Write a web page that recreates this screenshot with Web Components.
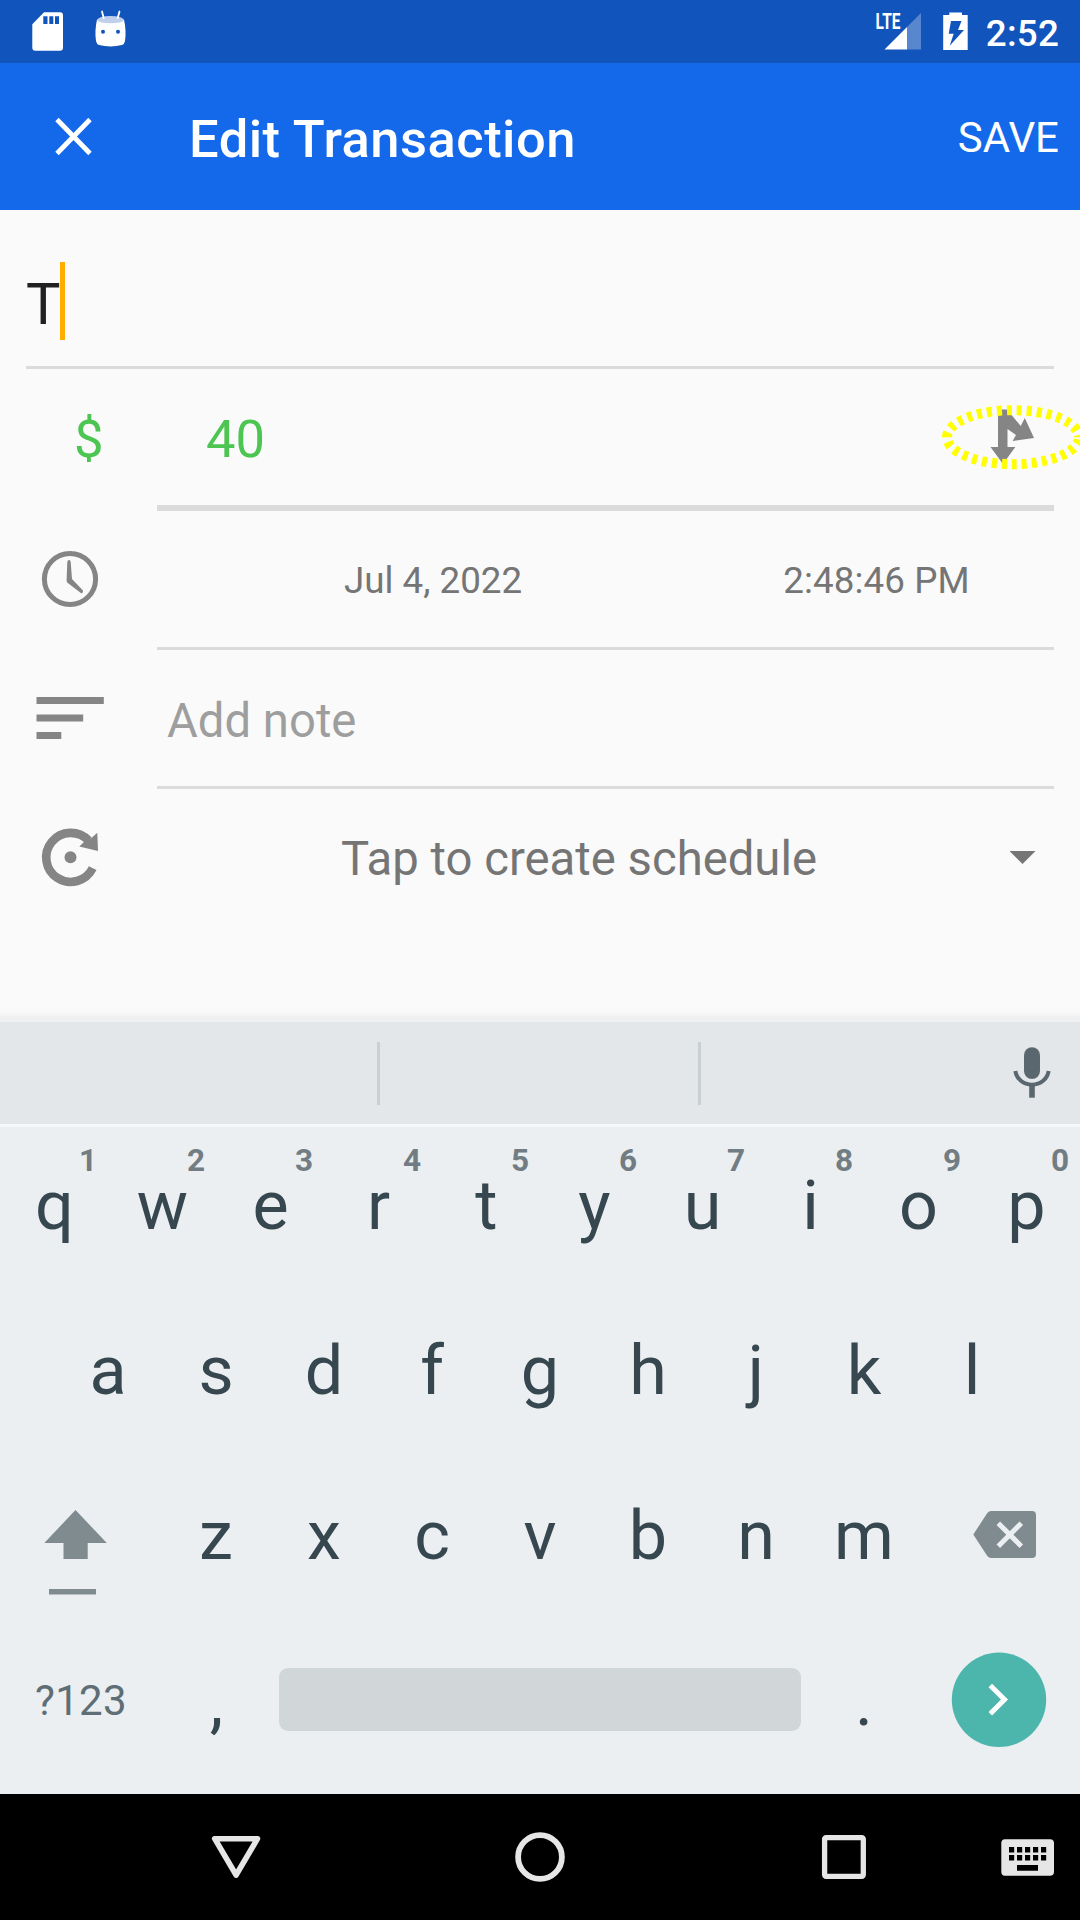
<!DOCTYPE html>
<html lang="en">
<head>
<meta charset="utf-8">
<title>Edit Transaction</title>
<style>
html,body{margin:0;padding:0}
body{width:1080px;height:1920px;overflow:hidden;background:#fafafa;font-family:Roboto,"Noto Sans",sans-serif}
</style>
</head>
<body>
<transaction-screen></transaction-screen>
<script>
const define=(name,html,setup)=>customElements.define(name,class extends HTMLElement{
  connectedCallback(){
    if(this.shadowRoot)return;
    const t=document.createElement('template');
    t.innerHTML='<style>*{box-sizing:border-box}svg{display:block;flex:none}</style>'+html;
    this.attachShadow({mode:'open'}).appendChild(t.content.cloneNode(true));
    if(setup)setup(this,this.shadowRoot);
  }
});

/* Each icon: drawing box (screen units) and shapes */
const ICONS={
  notifications:['0 0 160 63',`<path fill="#fff" fill-rule="evenodd" d="M44 12.3H60Q63 12.3 63 15.3V47.7Q63 50.7 60 50.7H35.3Q32.3 50.7 32.3 47.7V24.2ZM43.3 16.3V24H47.5V16.3ZM49.3 16.3V24H53.3V16.3ZM55 16.3V24H59V16.3Z"/>
   <path fill="#fff" d="M97 19.5Q110.5 25.5 124 19.5Q126.5 31 125 41Q124.4 44.3 122 45.1Q110.5 48 99 45.1Q96.600 44.3 96 41Q94.500 31 97 19.500Z"/>
   <path fill="#c0d0ec" d="M97 20Q99 16 110.500 16Q122 16 124 20Q122 23.300 110.500 23.300Q99 23.300 97 20Z"/>
   <path d="M102 11.500L103.700 18M119.500 11.500L117.700 18" stroke="#fff" stroke-width="1.800" stroke-linecap="round"/>
   <circle cx="103" cy="31.700" r="2" fill="#1054bc"/><circle cx="118" cy="31.700" r="2" fill="#1054bc"/>`],
  signal:['872 0 56 63',`<path fill="#fff" fill-opacity=".3" d="M907 27L921 13V49.500H907Z"/><path fill="#fff" d="M884.500 49.500L907 27V49.500Z"/>
   <text x="875.500" y="29" font-family="Roboto" font-weight="700" font-size="22" fill="#fff" textLength="25" lengthAdjust="spacingAndGlyphs">LTE</text>`],
  battery:['928 0 52 63','<path fill="#fff" fill-rule="evenodd" d="M949.300 12.500H962V15H967.700V50H943.200V15H949.300ZM951 21L948.700 33.700H953.700L949.700 45.700L964 30H958L961.500 21Z"/>'],
  close:['0 63 157 147','<path d="M57 119.500L90 153.500M90 119.500L57 153.500" stroke="#fff" stroke-width="4.800" fill="none"/>'],
  split:['923 369 157 136',`<path fill="#858585" d="M998 409.500H1007L1020.700 426L1024.800 418L1034 438L1012.600 441L1016 435L1007.500 429V447H1015.300L1003 464L990.500 447H998Z"/>
   <g fill="none" stroke="#ff0" stroke-width="10" stroke-dasharray="5 5">
   <path d="M1013 410.200A66 27 0 0 1 1079 437.200" stroke-dashoffset="6.200"/>
   <path d="M1013 410.200A66 27 0 0 0 947 437.200" stroke-dashoffset="8.800"/>
   <path d="M1013 464.200A66 27 0 0 0 1079 437.200" stroke-dashoffset="1.200"/>
   <path d="M1013 464.200A66 27 0 0 1 947 437.200" stroke-dashoffset="3.800"/></g>`],
  clock:['0 511 157 136','<circle cx="70" cy="579" r="25.600" fill="none" stroke="#858585" stroke-width="5"/><path fill="#858585" d="M67.300 562Q67.500 560 69.200 560Q70.500 560 70.700 562L72 579L83 590.500Q83.500 592.500 81.500 593.600L67.800 583Q66.600 582 66.600 580.500Z"/>'],
  note:['0 650 157 136','<path fill="#858585" d="M36.500 697H103.800V704H36.500ZM36.500 714.500H83.200V721.500H36.500ZM36.500 732H61.300V739H36.500Z"/>'],
  repeat:['0 789 157 136','<circle cx="70.500" cy="857.200" r="6" fill="#858585"/><path d="M92.700 868.200A24.500 24.500 0 1 1 88.500 840.500" fill="none" stroke="#858585" stroke-width="8.600"/><path fill="#858585" d="M97.300 832.700L98 851L79.300 846.500L84.500 841.500L91.200 838.200Z"/>'],
  dropdown:['1006 845 34 24','<path fill="#757575" d="M1009.500 851H1035.500L1022.500 864Z"/>'],
  mic:['1000 1022 80 102','<rect x="1024" y="1047.200" width="16" height="31.800" rx="8" fill="#5b676e"/><path d="M1015.400 1071A16.700 15.300 0 0 0 1048.600 1071" fill="none" stroke="#5b676e" stroke-width="4"/><path d="M1029.200 1086H1034.800V1097.700H1029.200Z" fill="#5b676e"/>'],
  shift:['0 1454 162 165','<path fill="#808b8f" d="M75.500 1510L106.800 1543H87.700V1559H63.500V1543H44.300ZM49 1589H96V1594.500H49Z"/>'],
  backspace:['918 1454 162 165','<path fill="#808b8f" d="M973.300 1534.500L987.300 1513Q988.800 1511 991 1511H1032Q1036 1511 1036 1515V1554Q1036 1558 1032 1558H991Q988.800 1558 987.300 1556Z"/><path d="M998.300 1523.200L1021.300 1546.200M1021.300 1523.200L998.300 1546.200" stroke="#ebeff2" stroke-width="5"/>'],
  enter:['918 1619 162 165','<circle cx="999" cy="1699.800" r="47.200" fill="#4db6ac"/><path d="M990.300 1685.500L1004.500 1699.600L990.300 1713.700" fill="none" stroke="#fff" stroke-width="5"/>'],
  back:['204 1830 64 54','<path d="M214.700 1838.700H257.500L236.100 1875Z" fill="none" stroke="#e6e6e6" stroke-width="5.600" stroke-linejoin="round"/>'],
  home:['508 1825 64 64','<circle cx="540" cy="1857" r="21.900" fill="none" stroke="#e6e6e6" stroke-width="5.800"/>'],
  recents:['812 1825 64 64','<rect x="824.600" y="1837.600" width="38.700" height="38.700" rx="1.500" fill="none" stroke="#e6e6e6" stroke-width="5.300"/>'],
  keyboard:['996 1830 63 54','<path fill="#e6e6e6" fill-rule="evenodd" d="M1005 1839.300H1050Q1054 1839.300 1054 1843.300V1871.700Q1054 1875.700 1050 1875.700H1005Q1001.300 1875.700 1001.300 1871.700V1843.300Q1001.300 1839.300 1005 1839.300Z'
    +[1847,1855].map(y=>[1009,1017,1025,1033,1041].map(x=>`M${x} ${y}h5.200v5.500h-5.200Z`).join('')).join('')+'M1017 1865H1038V1870.700H1017Z"/>']
};
define('ui-icon','<style>:host{display:block;flex:none}</style>',(el,root)=>{
  const [box,body]=ICONS[el.getAttribute('name')],[,,w,h]=box.split(' ');
  root.innerHTML+=`<svg width="${w}" height="${h}" viewBox="${box}">${body}</svg>`;
});

define('status-bar',`<style>
:host{display:flex;height:63px;background:#1054bc;color:#fff}
.sp{flex:1}
span{flex:none;width:100px;font-size:36.75px;font-weight:500;padding:4px 21px 0 0;height:63px;line-height:60px;white-space:nowrap;display:flex;justify-content:flex-end;letter-spacing:.2px}
</style><ui-icon name="notifications"></ui-icon><div class="sp"></div><ui-icon name="signal"></ui-icon><ui-icon name="battery"></ui-icon><span>2:52</span>`);

define('app-bar',`<style>
:host{display:flex;height:147px;background:#1469eb;color:#fff}
h1{margin:0 0 0 32px;flex:1;font-size:52.5px;font-weight:500;line-height:147px;padding-top:3px;height:147px;letter-spacing:.47px}
b{font-weight:400;font-size:42px;line-height:147px;padding:1px 21px 0 0}
</style><ui-icon name="close"></ui-icon><h1><slot></slot></h1><b>SAVE</b>`);

define('form-row',`<style>
:host{display:block}
.body{display:flex;align-items:center;height:136px}
.lead{width:157px;flex:none;display:flex}
.main{flex:1;display:flex;align-items:center}
.line{height:var(--line,3px);margin:0 26px 0 157px;background:#dbdbdb}
</style><div class="body"><div class="lead"><slot name="lead"></slot></div><div class="main"><slot></slot></div></div><div class="line"></div>`);

define('title-field',`<style>
:host{display:flex;align-items:center;height:159px;margin:0 26px;border-bottom:3px solid #dbdbdb;color:#212121;font-size:57.75px}
span{display:block;width:34px;padding-top:6px;margin-top:26px;line-height:78px;white-space:nowrap}
i{width:5px;height:78px;background:#ffae00;margin-top:26px}
</style><span><slot></slot></span><i></i>`);

define('key-cap',`<style>
:host{display:flex;position:relative;width:108px;height:165px;flex:none;align-items:center;justify-content:center;font-size:68.25px;line-height:80px;color:#37474f;box-sizing:border-box;padding:0 0 var(--lift,2px) var(--nudge,0px)}
sup{position:absolute;left:68px;width:40px;text-align:center;top:17px;font-size:31.5px;font-weight:700;line-height:40px;color:#717d83}
</style><slot></slot>`,(el,root)=>{
  if(el.hasAttribute('hint'))root.innerHTML+=`<sup>${el.getAttribute('hint')}</sup>`;
});

define('soft-keyboard',`<style>
:host{display:block;background:#ebeff2;height:775px;position:relative}
.sh{height:3px;background:#eff0f1}
.sug{display:flex;align-items:center;height:102px;background:#e3e7ea}
.sug div{flex:1;height:63px}
.sug .a{flex:none;width:380px;border-right:3px solid #cacfd1}
.sug .b{flex:none;width:321px;border-right:3px solid #cacfd1}
.keys{height:670px;box-shadow:inset 0 3px #f6f8f9}
.row{display:flex;height:165px;justify-content:center}
#r1,.comma{--nudge:1px}
.sym{width:162px;text-align:center;font-size:42px;line-height:163px;letter-spacing:.3px;color:#5f6e74}
.space{width:522px;height:63px;border-radius:9px;background:#d1d6d9;margin:49px 9px 0}
.r4{--lift:0px}
</style><div class="sh"></div><div class="sug"><div class="a"></div><div class="b"></div><div></div><ui-icon name="mic"></ui-icon></div>
<div class="keys"><div class="row" id="r1"></div><div class="row" id="r2"></div>
<div class="row"><ui-icon name="shift"></ui-icon><div class="row" id="r3"></div><ui-icon name="backspace"></ui-icon></div>
<div class="row r4"><div class="sym">?123</div><key-cap class="comma">,</key-cap><div class="space"></div><key-cap>.</key-cap><ui-icon name="enter"></ui-icon></div></div>`,(el,root)=>{
  const keys=(s,h)=>[...s].map((c,i)=>`<key-cap${h?` hint="${h[i]}"`:''}>${c}</key-cap>`).join('');
  root.getElementById('r1').innerHTML=keys('qwertyuiop','1234567890');
  root.getElementById('r2').innerHTML=keys('asdfghjkl');
  root.getElementById('r3').innerHTML=keys('zxcvbnm');
});

define('nav-bar',`<style>
:host{display:flex;align-items:center;height:126px;background:#000;padding-left:204px}
.h{margin-left:240px}.r{margin-left:240px}.k{margin-left:120px}
</style><ui-icon name="back"></ui-icon><ui-icon class="h" name="home"></ui-icon><ui-icon class="r" name="recents"></ui-icon><ui-icon class="k" name="keyboard"></ui-icon>`);

define('transaction-screen',`<style>
:host{display:flex;flex-direction:column;width:1080px;height:1920px;background:#fafafa}
main{flex:1;min-height:0}
span{display:block;white-space:nowrap}
.amount{--line:6px;color:#4dc552;font-size:52.5px}
.cur{padding:4px 0 0 74px}
.val{padding:4px 0 0 49px;flex:1}
.date,.time{font-size:36.75px;color:#757575;text-align:center;padding-top:3px}
.date{width:552px}.time{width:335px;letter-spacing:.1px}
.hint{font-size:47.25px;color:#9e9e9e;padding:5px 0 0 10px}
.sched{font-size:47.25px;color:#757575;width:844px;text-align:center;padding:4px 0 0;margin-right:5px}
.last{--line:0px}
.fade{height:14px;background:linear-gradient(#fafafa,#f9f9f9 45%,#eeeeee)}
</style>
<status-bar></status-bar><app-bar>Edit Transaction</app-bar>
<main><title-field>T</title-field>
<form-row class="amount"><span slot="lead" class="cur">$</span><span class="val">40</span><ui-icon name="split"></ui-icon></form-row>
<form-row><ui-icon slot="lead" name="clock"></ui-icon><span class="date">Jul 4, 2022</span><span class="time">2:48:46 PM</span></form-row>
<form-row><ui-icon slot="lead" name="note"></ui-icon><span class="hint">Add note</span></form-row>
<form-row class="last"><ui-icon slot="lead" name="repeat"></ui-icon><span class="sched">Tap to create schedule</span><ui-icon name="dropdown"></ui-icon></form-row></main>
<div class="fade"></div><soft-keyboard></soft-keyboard><nav-bar></nav-bar>`);
</script>
</body>
</html>
